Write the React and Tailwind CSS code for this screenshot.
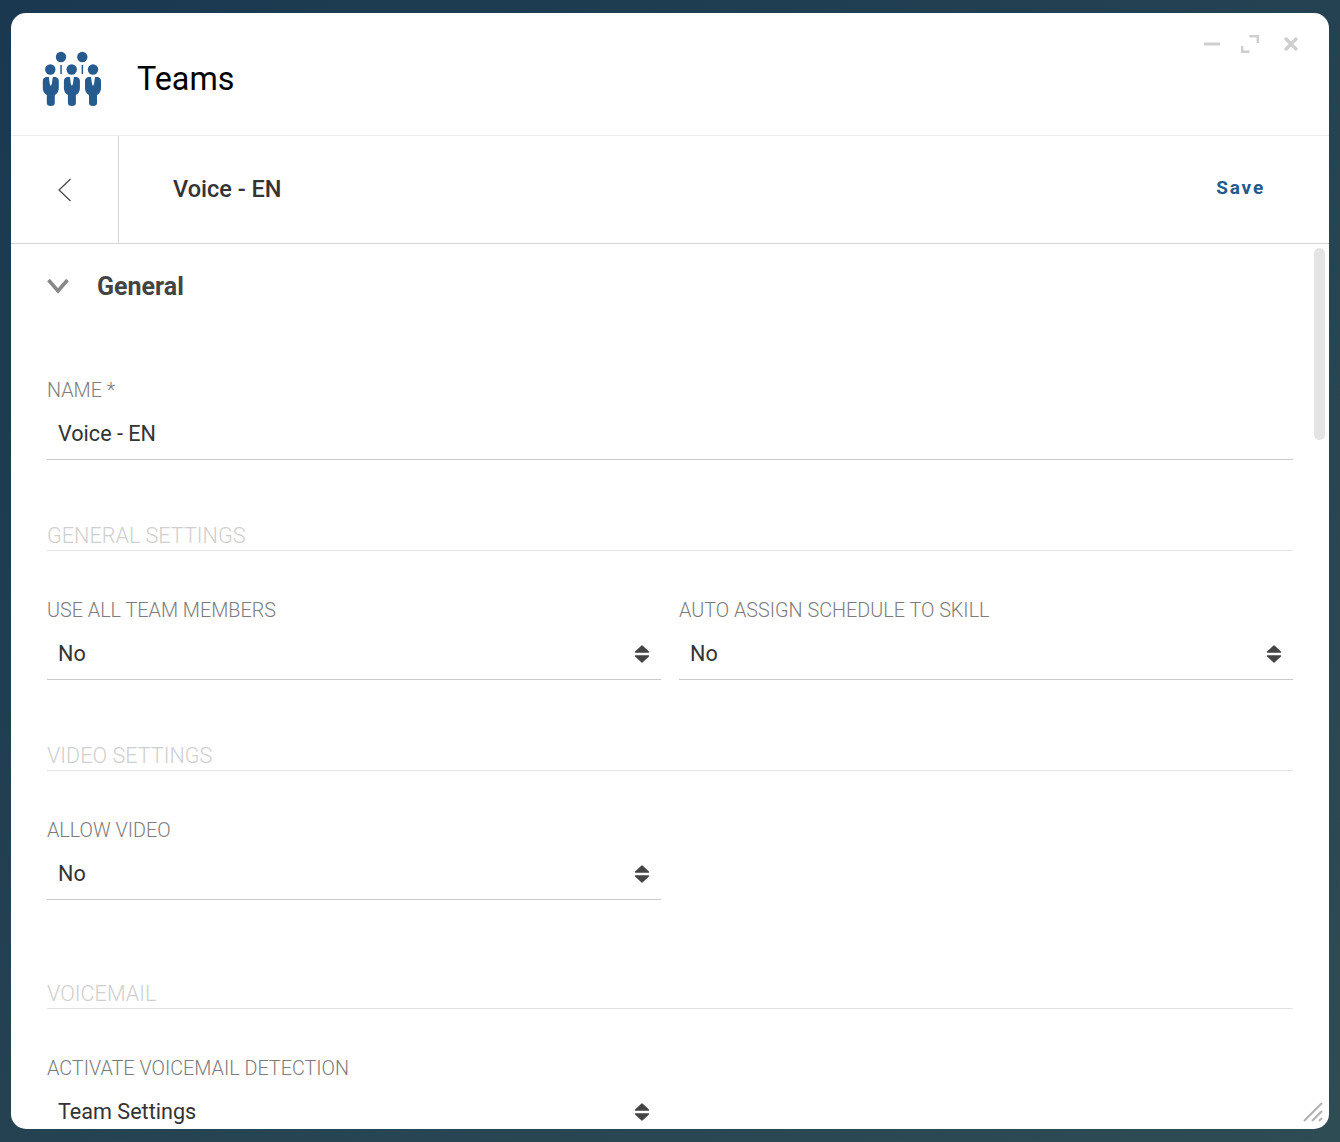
const FONT = "font-['Roboto','Liberation_Sans',sans-serif]"

function TeamsLogo() {
  const body = 'M-2 0 L-5 0 Q-8 1 -8 4 L-8 11 Q-8 16 -4 18 L-4 26 Q-4 29 0 29 Q4 29 4 26 L4 18 Q8 16 8 11 L8 4 Q8 1 5 0 L2 0 L1 7 L0 9 L-1 7 Z'
  return (
    <svg width="64" height="62" viewBox="40 48 64 62" fill="#255b8f" className="shrink-0">
      <circle cx="61" cy="57" r="5.2" />
      <circle cx="82.3" cy="57" r="5.2" />
      <circle cx="50.3" cy="69.5" r="5.2" />
      <circle cx="71.7" cy="69.5" r="5.2" />
      <circle cx="93" cy="69.5" r="5.2" />
      <rect x="60.3" y="65" width="1.5" height="9" />
      <rect x="81.6" y="65" width="1.5" height="9" />
      <path d={body} transform="translate(50.8 77)" />
      <path d={body} transform="translate(71.9 77)" />
      <path d={body} transform="translate(93 77)" />
    </svg>
  )
}

function WindowControls() {
  return (
    <div className="flex items-center pt-[22px] pr-[29px]">
      <svg width="18" height="18" viewBox="0 0 18 18" fill="#cfcfcf">
        <rect x="1" y="7.5" width="16" height="3" />
      </svg>
      <svg width="18" height="18" viewBox="0 0 18 18" fill="none" stroke="#cfcfcf" strokeWidth="2.4" className="ml-[19.5px]">
        <path d="M8.5 1.2 H16.8 V8" />
        <path d="M1.2 11 V16.8 H8.5" />
      </svg>
      <svg width="18" height="18" viewBox="0 0 18 18" fill="none" stroke="#cfcfcf" strokeWidth="3.2" className="ml-[23.5px]">
        <path d="M3 3 L15 15 M15 3 L3 15" />
      </svg>
    </div>
  )
}

function SortArrows() {
  return (
    <svg width="16" height="20" viewBox="0 0 16 20" fill="#444444" stroke="#444444" strokeWidth="1.4" strokeLinejoin="round" className="shrink-0">
      <path d="M8 2 L14.5 8 H1.5 Z" />
      <path d="M8 18 L14.5 12 H1.5 Z" />
    </svg>
  )
}

function Label({ children }) {
  return <div className="h-[22px] text-[19.8px] leading-[24px] font-light text-[#7c7c7c]">{children}</div>
}

function SectionHeading({ children, className = '' }) {
  return (
    <div className={`h-[27px] border-b border-[#e2e2e2] text-[21.6px] leading-[24px] font-light text-[#cfcfcf] ${className}`}>
      {children}
    </div>
  )
}

function TextField({ label, value }) {
  return (
    <div>
      <Label>{label}</Label>
      <div className="mt-[6px] flex h-[53px] items-center border-b border-[#c9c9c9] px-[11px] pt-[2px] text-[21.6px] text-[#333333]">
        {value}
      </div>
    </div>
  )
}

function SelectField({ label, value }) {
  return (
    <div>
      <Label>{label}</Label>
      <div className="mt-[6px] flex h-[53px] items-center justify-between border-b border-[#c9c9c9] px-[11px] pt-[2px] text-[21.6px] text-[#333333]">
        <span>{value}</span>
        <SortArrows />
      </div>
    </div>
  )
}

export default function App() {
  return (
    <div className={`${FONT} h-screen w-full overflow-hidden bg-gradient-to-br from-[#1a3850] to-[#2e4c53] px-[11px] py-[13px]`}>
      <div className="relative flex h-full flex-col overflow-hidden rounded-[15px] bg-white">
        <header className="flex h-[123px] shrink-0 items-start justify-between border-b border-[#ececec]">
          <div className="flex h-full items-center gap-[33px] pt-[10px] pl-[29px]">
            <TeamsLogo />
            <h1 className="text-[32.3px] font-normal text-black">Teams</h1>
          </div>
          <WindowControls />
        </header>

        <div className="flex h-[108px] shrink-0 items-center border-b border-[#d6d6d6]">
          <div className="flex h-full w-[108px] items-center border-r border-[#d6d6d6] pl-[47px]">
            <svg width="14" height="24" viewBox="0 0 14 24" fill="none" stroke="#444444" strokeWidth="1.2">
              <path d="M12.5 1 L1 12 L12.5 23" />
            </svg>
          </div>
          <div className="flex flex-1 items-center justify-between pr-[64px] pl-[54px]">
            <span className="text-[23.5px] font-medium text-[#333333]">Voice - EN</span>
            <button className="mb-[2px] text-[19px] font-bold tracking-[1.8px] text-[#235a8f]">Save</button>
          </div>
        </div>

        <main className="min-h-0 flex-1 overflow-hidden px-[36px]">
          <div className="flex h-[84px] items-center gap-[28px]">
            <svg width="22" height="16" viewBox="0 0 22 16" fill="none" stroke="#888888" strokeWidth="3.6">
              <path d="M1.5 2 L11 13 L20.5 2" />
            </svg>
            <span className="mt-[2px] text-[25px] font-bold text-[#444444]">General</span>
          </div>

          <div className="mt-[51px]">
            <TextField label="NAME *" value="Voice - EN" />
          </div>

          <SectionHeading className="mt-[64px]">GENERAL SETTINGS</SectionHeading>
          <div className="mt-[48px] grid grid-cols-2 gap-x-[18px]">
            <SelectField label="USE ALL TEAM MEMBERS" value="No" />
            <SelectField label="AUTO ASSIGN SCHEDULE TO SKILL" value="No" />
          </div>

          <SectionHeading className="mt-[64px]">VIDEO SETTINGS</SectionHeading>
          <div className="mt-[48px] grid grid-cols-2 gap-x-[18px]">
            <SelectField label="ALLOW VIDEO" value="No" />
          </div>

          <SectionHeading className="mt-[82px]">VOICEMAIL</SectionHeading>
          <div className="mt-[48px] grid grid-cols-2 gap-x-[18px]">
            <SelectField label="ACTIVATE VOICEMAIL DETECTION" value="Team Settings" />
          </div>
        </main>

        {/* overlay scrollbar + resize grip */}
        <div className="absolute top-[235px] right-[4px] h-[192px] w-[11px] rounded-full bg-[#e4e4e4]" />
        <svg width="20" height="20" viewBox="0 0 20 20" fill="none" stroke="#b0b0b0" strokeWidth="2" className="absolute right-[6px] bottom-[7px]">
          <path d="M1 19 L19 1 M9 19 L19 9 M16 19 L19 16" />
        </svg>
      </div>
    </div>
  )
}
